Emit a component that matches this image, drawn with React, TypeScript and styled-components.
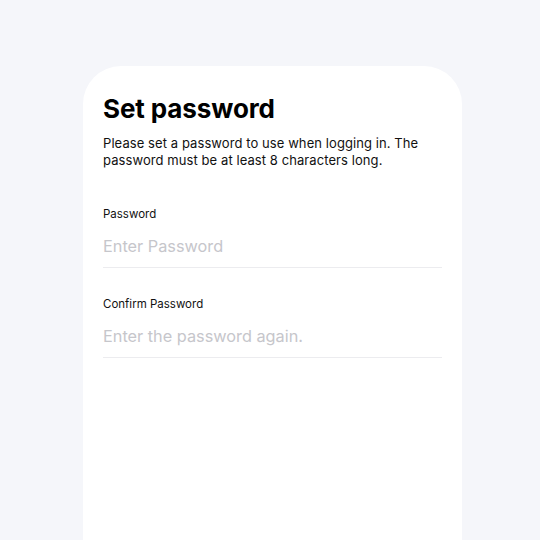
import { FC } from 'react'
import styled, { createGlobalStyle } from 'styled-components'

const GlobalStyle = createGlobalStyle`
  html, body {
    margin: 0;
    padding: 0;
    background: #f5f6fa;
    font-family: Inter, "Noto Sans", sans-serif;
    -webkit-font-smoothing: antialiased;
  }
`

type FieldProps = {
  label: string
  placeholder: string
}

const Field: FC<FieldProps> = ({ label, placeholder }) => (
  <StyledField>
    <StyledLabel>{label}</StyledLabel>
    <StyledInput type="password" placeholder={placeholder} />
  </StyledField>
)

const App: FC = () => (
  <>
    <GlobalStyle />
    <StyledPage>
      <StyledCard>
        <StyledTitle>Set password</StyledTitle>
        <StyledDescription>
          Please set a password to use when logging in. The password must be at least 8 characters long.
        </StyledDescription>
        <StyledForm>
          <Field label="Password" placeholder="Enter Password" />
          <Field label="Confirm Password" placeholder="Enter the password again." />
        </StyledForm>
      </StyledCard>
    </StyledPage>
  </>
)

export default App

const StyledPage = styled.div`
  height: 540px;
  overflow: hidden;
  display: flex;
  padding: 66px 0 0 83px;
  box-sizing: border-box;
`

const StyledCard = styled.div`
  width: 379px;
  min-height: 520px;
  box-sizing: border-box;
  padding: 27px 20px 0;
  background: #ffffff;
  border-radius: 38px 38px 0 0;
`

const StyledTitle = styled.h1`
  margin: 0;
  font-size: 26px;
  line-height: 32px;
  font-weight: 700;
  color: #000;
  letter-spacing: -0.1px;
`

const StyledDescription = styled.p`
  margin: 10px 0 0;
  font-size: 13px;
  line-height: 17px;
  letter-spacing: 0.08px;
  color: #111;
`

const StyledForm = styled.div`
  display: flex;
  flex-direction: column;
  gap: 29px;
  margin-top: 38px;
`

const StyledField = styled.label`
  display: flex;
  flex-direction: column;
  border-bottom: 1px solid #ececef;
`

const StyledLabel = styled.span`
  font-size: 11.5px;
  line-height: 14px;
  color: #111;
`

const StyledInput = styled.input`
  border: none;
  outline: none;
  padding: 0;
  margin-top: 4px;
  height: 42px;
  font-family: inherit;
  font-size: 16.3px;
  color: #000;
  background: transparent;

  &::placeholder {
    color: #c6c6cb;
  }
`
